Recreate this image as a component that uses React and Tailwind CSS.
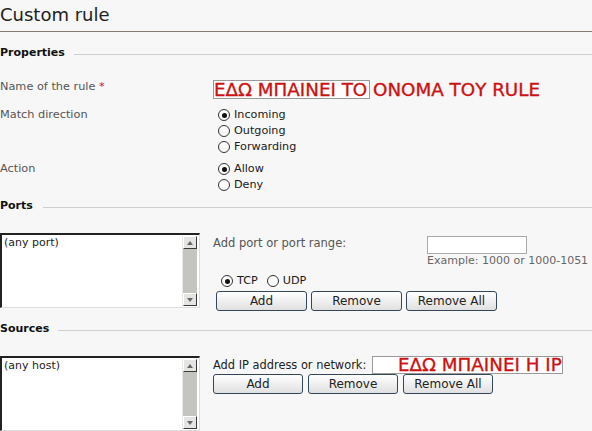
import React from "react";

const Radio = ({ checked }) => (
  <span className="w-[12px] h-[12px] rounded-full border border-[#333] bg-[#fbfbfb] flex items-center justify-center shrink-0">
    {checked && <span className="w-[5px] h-[5px] rounded-full bg-[#111]" />}
  </span>
);

const Section = ({ title, mt, ml }) => (
  <div className={`flex items-start h-[20px] ${mt}`}>
    <span className="font-bold leading-[20px] text-[#111]">{title}</span>
    <div className={`flex-1 h-px bg-[#cfcfcf] mt-[11px] ${ml}`} />
  </div>
);

const ScrollBtn = ({ up }) => (
  <div className="h-[13px] bg-[#e4e4e2] border border-t-white border-l-white border-r-[#3a3a3a] border-b-[#3a3a3a] flex items-center justify-center">
    {up ? (
      <span className="w-0 h-0 border-l-[3px] border-r-[3px] border-b-[4px] border-l-transparent border-r-transparent border-b-[#666]" />
    ) : (
      <span className="w-0 h-0 border-l-[3px] border-r-[3px] border-t-[4px] border-l-transparent border-r-transparent border-t-[#666]" />
    )}
  </div>
);

const Listbox = ({ text }) => (
  <div className="w-[200px] h-[75px] shrink-0 flex bg-white border-t-2 border-l-2 border-t-[#222] border-l-[#222] border-r border-b border-r-[#ddd] border-b-[#ddd]">
    <div className="flex-1 pl-[2px] pt-[1px] leading-[14px] text-[#222]">{text}</div>
    <div className="w-[15px] my-[1px] mr-[2px] flex flex-col bg-[#c4c4c0] border-l border-l-[#e8e8e8]">
      <ScrollBtn up />
      <div className="flex-1" />
      <ScrollBtn />
    </div>
  </div>
);

const Btn = ({ children, w }) => (
  <div
    className={`${w} h-[20px] border border-[#34465a] rounded-[3px] bg-linear-to-b from-white to-[#e0e0e0] text-[12px] leading-[19px] text-center text-[#222]`}
  >
    {children}
  </div>
);

const RadioRow = ({ label, checked }) => (
  <div className="h-[16px] flex items-center gap-[4px] leading-[16px] text-[#1a1a1a] text-[11.2px]">
    <Radio checked={checked} />
    <span>{label}</span>
  </div>
);

export default function App() {
  return (
    <div className="w-[592px] h-[431px] overflow-hidden bg-[#f7f7f7] font-['DejaVu_Sans',sans-serif] text-[11px] text-[#222]">
      <div className="h-[32px] border-b border-[#857a72] text-[18px] leading-[25px] pt-[2px] text-[#222]">
        Custom rule
      </div>

      <Section title="Properties" mt="mt-[11px]" ml="ml-[9px]" />

      <div className="mt-[17px] flex">
        <div className="w-[213px] leading-[14px] text-[#555] text-[11.3px]">
          Name of the rule <span className="text-[#d01010]">*</span>
        </div>
        <div className="w-[157px] h-[19px] border border-[#9a9a9a] bg-white text-[18.3px] leading-[17px] text-[#cc1111] whitespace-nowrap [-webkit-text-stroke:0.35px_#cc1111]">
          ΕΔΩ ΜΠΑΙΝΕΙ ΤΟ ΟΝΟΜΑ ΤΟΥ RULE
        </div>
      </div>

      <div className="mt-[8px] flex">
        <div className="w-[213px] leading-[16px] text-[#555] text-[11.3px]">Match direction</div>
        <div className="flex flex-col pl-[5px]">
          {["Incoming", "Outgoing", "Forwarding"].map((l, i) => (
            <RadioRow key={l} label={l} checked={i === 0} />
          ))}
        </div>
      </div>

      <div className="mt-[6px] flex">
        <div className="w-[213px] leading-[16px] text-[#555] text-[11.3px]">Action</div>
        <div className="flex flex-col pl-[5px]">
          {["Allow", "Deny"].map((l, i) => (
            <RadioRow key={l} label={l} checked={i === 0} />
          ))}
        </div>
      </div>

      <Section title="Ports" mt="mt-[3px]" ml="ml-[10px]" />

      <div className="mt-[17px] flex">
        <Listbox text="(any port)" />
        <div className="ml-[13px] flex flex-col">
          <div className="mt-[3px] flex">
            <div className="w-[214px] leading-[14px] text-[#555] text-[11.5px]">Add port or port range:</div>
            <div className="w-[100px] h-[18px] border border-[#aaa] bg-white" />
          </div>
          <div className="pl-[214px] leading-[14px] text-[#666] whitespace-nowrap">
            Example: 1000 or 1000-1051
          </div>
          <div className="mt-[5px] h-[16px] flex items-center pl-[8px] leading-[16px] text-[#1a1a1a] text-[11.2px]">
            <div className="flex items-center gap-[4px]">
              <Radio checked />
              <span>TCP</span>
            </div>
            <div className="flex items-center gap-[4px] ml-[9px]">
              <Radio />
              <span>UDP</span>
            </div>
          </div>
          <div className="mt-[2px] ml-[3px] flex gap-[4px]">
            <Btn w="w-[91px]">Add</Btn>
            <Btn w="w-[91px]">Remove</Btn>
            <Btn w="w-[91px]">Remove All</Btn>
          </div>
        </div>
      </div>

      <Section title="Sources" mt="mt-[8px]" ml="ml-[9px]" />

      <div className="mt-[17px] flex">
        <Listbox text="(any host)" />
        <div className="ml-[13px] flex flex-col">
          <div className="flex">
            <div className="w-[159px] mt-[2px] leading-[14px] text-[#222] text-[11.4px] whitespace-nowrap">
              Add IP address or network:
            </div>
            <div className="w-[191px] h-[18px] border border-[#9a9a9a] bg-white pl-[25px] text-[18.3px] leading-[16px] text-[#cc1111] whitespace-nowrap [-webkit-text-stroke:0.35px_#cc1111]">
              ΕΔΩ ΜΠΑΙΝΕΙ Η IP
            </div>
          </div>
          <div className="flex gap-[5px]">
            <Btn w="w-[90px]">Add</Btn>
            <Btn w="w-[90px]">Remove</Btn>
            <Btn w="w-[90px]">Remove All</Btn>
          </div>
        </div>
      </div>
    </div>
  );
}
